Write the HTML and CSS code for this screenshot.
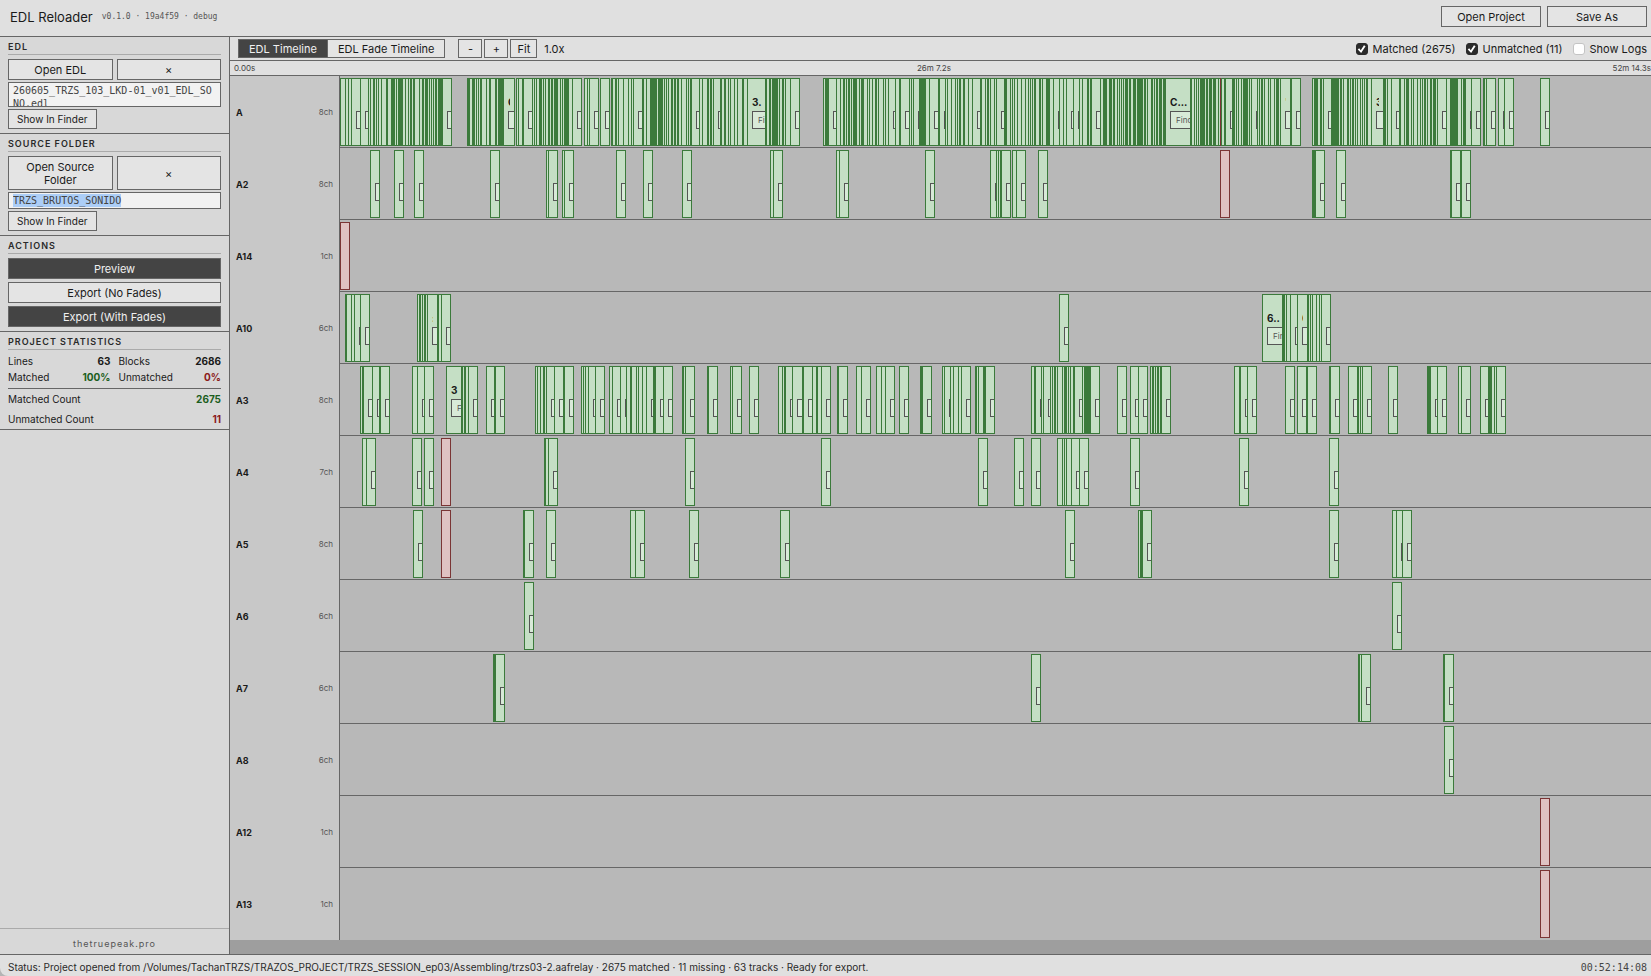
FILE: index.html
```html
<!DOCTYPE html>
<html lang="en">
<head>
<meta charset="utf-8">
<title>EDL Reloader</title>
<link rel="stylesheet" href="styles.css">
</head>
<body>
<div class="app">
  <header class="topbar">
    <h1 class="app-title">EDL Reloader</h1>
    <span class="version">v0.1.0 · 19a4f59 · debug</span>
    <div class="topbar-actions">
      <button class="btn" type="button">Open Project</button>
      <button class="btn" type="button">Save As</button>
    </div>
  </header>

  <div class="body">
    <aside class="sidebar">
      <section class="panel">
        <h2 class="panel-title">EDL</h2>
        <div class="pair">
          <button class="btn" type="button">Open EDL</button>
          <button class="btn" type="button" aria-label="Clear EDL">×</button>
        </div>
        <textarea class="path path-tall" aria-label="EDL file" readonly>260605_TRZS_103_LKD-01_v01_EDL_SONO.edl</textarea>
        <button class="btn btn-small" type="button">Show In Finder</button>
      </section>
      <section class="panel">
        <h2 class="panel-title">SOURCE FOLDER</h2>
        <div class="pair">
          <button class="btn" type="button">Open Source Folder</button>
          <button class="btn" type="button" aria-label="Clear source folder">×</button>
        </div>
        <input class="path" id="source-path" type="text" aria-label="Source folder" value="TRZS_BRUTOS_SONIDO" readonly>
        <button class="btn btn-small" type="button">Show In Finder</button>
      </section>
      <section class="panel">
        <h2 class="panel-title">ACTIONS</h2>
        <div class="stack">
          <button class="btn btn-dark" type="button">Preview</button>
          <button class="btn" type="button">Export (No Fades)</button>
          <button class="btn btn-dark" type="button">Export (With Fades)</button>
        </div>
      </section>
      <section class="panel panel-stats">
        <h2 class="panel-title">PROJECT STATISTICS</h2>
        <div class="stat-grid">
          <div class="stat"><span>Lines</span><b>63</b></div>
          <div class="stat"><span>Blocks</span><b>2686</b></div>
          <div class="stat"><span>Matched</span><b class="good">100%</b></div>
          <div class="stat"><span>Unmatched</span><b class="bad">0%</b></div>
        </div>
        <div class="stat-rows">
          <div class="stat"><span>Matched Count</span><b class="good">2675</b></div>
          <div class="stat"><span>Unmatched Count</span><b class="bad">11</b></div>
        </div>
      </section>
      <footer class="credit">thetruepeak.pro</footer>
    </aside>

    <main class="main">
      <div class="toolbar">
        <div class="tabs">
          <button class="tab tab-active" type="button">EDL Timeline</button>
          <button class="tab" type="button">EDL Fade Timeline</button>
        </div>
        <div class="zoom">
          <button class="btn" type="button">-</button>
          <button class="btn" type="button">+</button>
          <button class="btn" type="button">Fit</button>
          <span class="zoom-value">1.0x</span>
        </div>
        <div class="filters">
          <label class="filter"><input class="check" type="checkbox" checked>Matched (2675)</label>
          <label class="filter"><input class="check" type="checkbox" checked>Unmatched (11)</label>
          <label class="filter"><input class="check" type="checkbox">Show Logs</label>
        </div>
      </div>
      <div class="ruler"><span>0.00s</span><span>26m 7.2s</span><span>52m 14.3s</span></div>
      <div class="tracks" id="tracks"></div>
    </main>
  </div>

  <footer class="status">
    <span>Status: Project opened from /Volumes/TachanTRZS/TRAZOS_PROJECT/TRZS_SESSION_ep03/Assembling/trzs03-2.aafrelay · 2675 matched · 11 missing · 63 tracks · Ready for export.</span>
    <span class="timecode">00:52:14:08</span>
  </footer>
</div>
<script src="timeline.js"></script>
</body>
</html>
```

FILE: styles.css
```css
* { box-sizing: border-box; }

body {
  margin: 0;
  background: #b4b4b4;
  color: #1a1a1a;
  font: 11px/13px Inter, "Liberation Sans", sans-serif;
}

button, input, textarea { font: inherit; color: inherit; margin: 0; }

.app { display: flex; flex-direction: column; height: 100vh; }

.topbar {
  display: flex;
  align-items: center;
  flex: none;
  padding: 6px 4px 9px 10px;
  background: #e0e0e0;
  border-bottom: 1px solid #666;
}
.app-title { margin: 0; font-size: 13px; line-height: 16px; font-weight: 400; }
.version {
  margin-left: 9px;
  color: #555;
  font: 8px/10px "DejaVu Sans Mono", monospace;
}
.topbar-actions { display: flex; gap: 6px; margin-left: auto; }
.topbar-actions .btn { width: 100px; }

.btn {
  padding: 4px 8px 2px;
  border: 1px solid #666;
  border-radius: 0;
  background: #e4e4e4;
  text-align: center;
}
.btn-dark { background: #444; color: #f0f0f0; }
.btn-small { padding: 3px 8px; font-size: 10px; line-height: 12px; }

.body { display: flex; flex: 1; min-height: 0; }

.sidebar {
  display: flex;
  flex-direction: column;
  flex: none;
  width: 230px;
  background: #d8d8d8;
  border-right: 1px solid #666;
}
.panel { padding: 3px 8px 4px; border-bottom: 1px solid #666; }
.panel-stats { padding-bottom: 0; }
.panel-title {
  margin: 0 0 4px;
  padding-bottom: 1px;
  border-bottom: 1px solid #aaa;
  font-size: 9px;
  line-height: 13px;
  font-weight: 600;
  letter-spacing: 1px;
  color: #2a2a2a;
}
.pair { display: grid; grid-template-columns: 1fr 1fr; gap: 4px; margin-bottom: 2px; }
.stack { display: flex; flex-direction: column; gap: 3px; }
.path {
  display: block;
  width: 100%;
  margin-bottom: 2px;
  padding: 1px 4px;
  border: 1px solid #666;
  border-radius: 0;
  outline: none;
  resize: none;
  overflow: hidden;
  background: #f2f2f2;
  color: #444;
  font: 10px/13px "DejaVu Sans Mono", monospace;
}
.path-tall { height: 25px; word-break: break-all; }
.path::selection { background: #accef7; color: #444; }

.stat { display: flex; justify-content: space-between; align-items: center; }
.stat b { font-weight: 700; }
.stat-grid {
  display: grid;
  grid-template-columns: 1fr 1fr;
  gap: 2px 8px;
  padding-bottom: 4px;
  font-size: 10px;
  line-height: 14px;
}
.stat-rows { border-top: 1px solid #666; font-size: 10px; line-height: 20px; }
.good { color: #1b5e20; }
.bad { color: #8b1a1a; }
.credit {
  margin-top: auto;
  padding: 9px 8px 4px;
  border-top: 1px solid #aaa;
  color: #555;
  font-size: 9px;
  line-height: 12px;
  letter-spacing: 1px;
  text-align: center;
}

.main { display: flex; flex-direction: column; flex: 1; min-width: 0; background: #9e9e9e; }

.toolbar {
  display: flex;
  align-items: center;
  flex: none;
  padding: 2px 4px 2px 8px;
  background: #e0e0e0;
  border-bottom: 1px solid #666;
}
.tabs { display: flex; border: 1px solid #666; }
.tab { padding: 3px 10px 1px; border: 0; background: #e4e4e4; }
.tab-active { background: #444; color: #f0f0f0; border-right: 1px solid #666; }
.zoom { display: flex; align-items: center; gap: 2px; margin-left: 13px; }
.zoom .btn { min-width: 24px; padding: 3px 6px 1px; }
.zoom-value { margin-left: 5px; padding-top: 2px; }
.filters { display: flex; gap: 10px; margin-left: auto; padding-top: 1px; }
.filter { display: flex; align-items: center; gap: 5px; }
.check {
  width: 12px;
  height: 12px;
  border: 1px solid #c4c4c4;
  border-radius: 3px;
  background: #fff;
  appearance: none;
}
.check:checked { border-color: #2b2b2b; background: #2b2b2b; }
.check:checked::before {
  content: "";
  display: block;
  width: 10px;
  height: 10px;
  background: #fff;
  clip-path: polygon(12% 54%, 26% 42%, 42% 62%, 74% 12%, 90% 22%, 46% 90%);
}

.ruler {
  display: flex;
  justify-content: space-between;
  flex: none;
  padding: 1px 0 1px 4px;
  background: #e0e0e0;
  border-bottom: 1px solid #666;
  color: #444;
  font-size: 8px;
  line-height: 12px;
}

.tracks { flex: 1; min-height: 0; overflow: hidden; }
.track { display: flex; height: 72px; }
.track-head {
  display: flex;
  align-items: center;
  justify-content: space-between;
  width: 110px;
  padding: 1px 6px 0;
  background: #c8c8c8;
  border-right: 1px solid #666;
  font-size: 9px;
}
.track-head b { font-weight: 700; }
.track-head span { color: #555; font-size: 8px; }
.lane { position: relative; flex: 1; background: #b8b8b8; border-bottom: 1px solid #666; overflow: hidden; }
.track:last-child .lane { border-bottom: 0; }

.clip {
  position: absolute;
  top: 2px;
  height: 68px;
  padding: 16px 4px 0;
  border: 1px solid #3b7a3b;
  background: #c5dfc5;
  overflow: hidden;
}
.clip-missing { border-color: #7a3535; background: #dfc2c2; }
.clip-name {
  height: 16px;
  overflow: hidden;
  white-space: nowrap;
  font-size: 10px;
  line-height: 15px;
  font-weight: 700;
}
.clip-wide .clip-name { margin-right: -4px; }
.clip-find {
  display: block;
  width: 40px;
  height: 18px;
  padding: 0 5px;
  border: 1px solid #555;
  border-radius: 0;
  background: #d8ead8;
  color: #555;
  font-size: 8px;
  line-height: 16px;
  text-align: left;
}

.status {
  display: flex;
  align-items: center;
  justify-content: space-between;
  flex: none;
  padding: 6px 4px 2px 8px;
  border-top: 1px solid #666;
  border-bottom-left-radius: 8px;
  background: #e0e0e0;
  color: #2a2a2a;
  font-size: 10px;
}
.timecode { color: #444; font: 10px/13px "DejaVu Sans Mono", monospace; }
```

FILE: timeline.js
```js
/* Each group is "start start*count ... >end" in timeline units; a count marks
   clips that begin one unit apart, an r suffix marks an unmatched clip. */
const SPAN = 1311;
const MIN_WIDTH = 10;

const tracks = [
  { name: "A", ch: 8, labels: { 163: "C", 407: "3.", 825: "C...", 940: "'", 1031: "3" }, groups: [
    "0 5 8 11 20 28 30 33*2 36 38 41 46*2 51*4 56 58*5 65 68 70*2 73*2 79 82*2 85*3 89 91 93 95*2 98*5 >112",
    "127*3 132*3 136 138 140*2 146 149*2 155*2 158*6 >175",
    "176 178 182*2 192 194 196 199*3 203 205 208*2 211*2 214*4 220 222 224*5 232 >242",
    "244 247 249 >259",
    "260 >270",
    "271*2 275*2 278 283 288 291 293 302*2 306 310*7 318*5 324 326 328 331*2 334*2 337*2 341 346 348 350*2 359 362 367*2 370*2 373 380*2 384*2 388 390 394 397 402*2 407 425*2 429*2 432*6 439 442*2 445 450 >460",
    "483 485*4 496 500 503*2 506 508*2 511 513*4 519 521*3 527 529 532 535*2 538 543 545 548 555 559*2 569 571 573 579*7 589 598*2 605 607 611 615 617 619*2 623*2 628 632 640*2 645 647*2 650 654 656 664*3 670 672 674 677 681 685 688 690 692 694*2 699*2 702 706*4 713 719 723 726 733 739 742 747*2 750*2 760 763*4 769*3 773*2 777 779 781 783 785*3 789*2 793*3 797*6 804*2 807 811*2 814 816*2 819*3 823*3 850*2 854 856 858 860*5 866*2 869*3 873*3 878 880r 881 884*2 892*3 896 898 901 903*5 909 911 917 919 921*2 924 928 930 934 936*3 940 950*2 >961",
    "972 974*4 980*2 983 991*8 1000*2 1003 1007*2 1010 1012*2 1015 1017 1020 1022 1024 1026*2 1031 1043*3 1047 1051 1059*2 1064 1066*3 1071 1073 1077 1080 1082 1084*2 1087 1090*2 1093*3 1097 1106 1110*8 1121 1123*3 1131 >1141",
    "1143*2 1146 >1156",
    "1158 1164 >1174",
    "1200 >1210"] },
  { name: "A2", ch: 8, groups: ["30", "54", "74", "150", "206 208", "222 224", "276", "303", "342", "430 433", "496 499", "585", "650 656 658 660*2 >671", "672 676", "698", "880r", "972*4", "996", "1110*2 1120*2"] },
  { name: "A14", ch: 1, groups: ["0r"] },
  { name: "A10", ch: 6, labels: { 87: ":", 922: "6..", 957: "6" }, groups: ["5*2 11 14 20", "77 79*2 82 84*2 87 97*2 101", "719", "922 942*3 946 950 957 967*2 970 972 976 979 981"] },
  { name: "A3", ch: 8, labels: { 106: "3" }, groups: ["20 22*2 32 39*2 >50", "72 77 84", "106 121*2 124*2 128", "146 154*2", "195 197 200 203*2 206 214 223*2", "241 243 245 248 255", "269 272 280 286 290*2 296 298 302 306 313*3 323", "342*2 345", "367*2", "390 392", "409", "438 442 444*2 452 462*2 472 476*2 481", "497*2", "516 521", "536 541 545", "559", "580*3", "602 604 610 613 618 621", "635*2 638 643*3", "691 694*2 701 703 710 712 714*2 717 722 724*3 728 730 733*2 742 744*7", "777", "790 798", "810 812*2 815 817*2 820*2", "894 899*2 907", "945", "957 966*2", "989*2", "1008 1017*2 1020 1022", "1048", "1087*4 1097", "1118 1121", "1140 1148*4 1154 1156"] },
  { name: "A4", ch: 7, groups: ["22 26", "72", "84", "101r", "204*2 208", "345", "481", "638", "674", "691", "717 722 724 726 731 739", "790", "899", "989"] },
  { name: "A5", ch: 8, groups: ["73", "101r", "183*2", "206", "290 295", "349", "440", "725", "798 800*3", "989", "1052 1056 1062"] },
  { name: "A6", ch: 6, groups: ["184", "1052"] },
  { name: "A7", ch: 6, groups: ["153*3", "691", "1018*2 1021", "1103*2"] },
  { name: "A8", ch: 6, groups: ["1104"] },
  { name: "A12", ch: 1, groups: ["1200r"] },
  { name: "A13", ch: 1, groups: ["1200r"] }
];

function parseGroup(text) {
  const starts = [];
  let end = null;
  for (const token of text.split(" ")) {
    if (token[0] === ">") { end = Number(token.slice(1)); continue; }
    const missing = token.endsWith("r");
    const [first, count = 1] = token.replace("r", "").split("*").map(Number);
    for (let i = 0; i < count; i++) starts.push({ at: first + i, missing });
  }
  const last = starts[starts.length - 1].at;
  if (end === null) end = last + MIN_WIDTH;
  return starts.map((clip, i) => {
    const next = i + 1 < starts.length ? starts[i + 1].at : end + 1;
    const width = Math.min(Math.max(MIN_WIDTH, next - clip.at + 1), end - clip.at);
    return { ...clip, room: next - clip.at, width };
  });
}

function buildClip(clip, label) {
  const el = document.createElement("div");
  el.className = clip.missing ? "clip clip-missing" : "clip";
  if (clip.room > 14) el.classList.add("clip-wide");
  el.style.left = (clip.at / SPAN * 100) + "%";
  el.style.width = (clip.width / SPAN * 100) + "%";
  if (clip.missing || clip.room <= 5) return el;
  const name = document.createElement("div");
  name.className = "clip-name";
  name.textContent = label || "";
  const find = document.createElement("button");
  find.type = "button";
  find.className = "clip-find";
  find.setAttribute("aria-label", "Find");
  if (clip.room > 14 && label) find.textContent = "Find";
  el.append(name, find);
  return el;
}

const root = document.getElementById("tracks");
for (const track of tracks) {
  const row = document.createElement("div");
  row.className = "track";
  const head = document.createElement("div");
  head.className = "track-head";
  const name = document.createElement("b");
  name.textContent = track.name;
  const ch = document.createElement("span");
  ch.textContent = track.ch + "ch";
  head.append(name, ch);
  const lane = document.createElement("div");
  lane.className = "lane";
  for (const group of track.groups) {
    for (const clip of parseGroup(group)) lane.append(buildClip(clip, (track.labels || {})[clip.at]));
  }
  row.append(head, lane);
  root.append(row);
}

const source = document.getElementById("source-path");
source.focus({ preventScroll: true });
source.select();
```
